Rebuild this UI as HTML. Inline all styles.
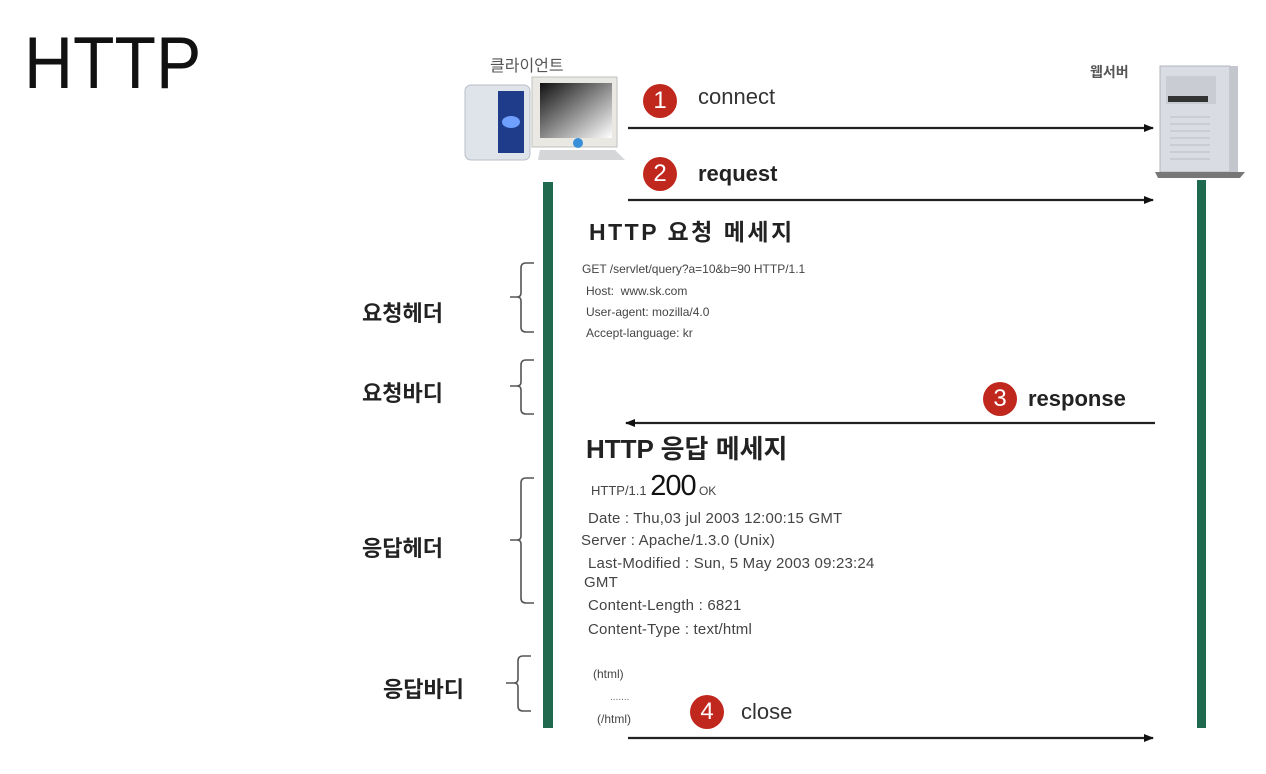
<!DOCTYPE html>
<html><head><meta charset="utf-8"><style>
body{margin:0;width:1266px;height:774px;background:#fff;position:relative;overflow:hidden;font-family:"Liberation Sans","Noto Sans CJK KR",sans-serif;color:#222}
.a{position:absolute;white-space:nowrap}
.c{position:absolute;width:34px;height:34px;border-radius:50%;background:#c0271d;color:#fff;font-size:24px;text-align:center;line-height:34px}
.k{font-weight:bold;font-size:22px;color:#222}
.s{font-size:12px;color:#444}
.r{font-size:15px;color:#444;letter-spacing:0.2px}
</style></head><body>
<div class="a" style="left:24px;top:22px;font-size:73px;color:#111;transform:scaleX(0.93);transform-origin:left top">HTTP</div>

<div class="a" style="left:490px;top:52px;font-size:16px;color:#555">클라이언트</div>
<div class="a" style="left:1090px;top:62px;font-size:14px;color:#555;font-weight:bold">웹서버</div>

<svg class="a" style="left:460px;top:75px" width="170" height="90">
<rect x="5" y="10" width="65" height="75" rx="6" fill="#dfe3ea" stroke="#b8bec8"/>
<rect x="38" y="16" width="26" height="62" fill="#1e3c8a"/>
<ellipse cx="51" cy="47" rx="9" ry="6" fill="#6fa0ff"/>
<rect x="72" y="2" width="85" height="70" fill="#e9e8e3" stroke="#c0c0bc"/>
<defs><linearGradient id="g" x1="0" y1="0" x2="1" y2="1"><stop offset="0" stop-color="#111"/><stop offset="1" stop-color="#fff"/></linearGradient></defs>
<rect x="80" y="8" width="72" height="55" fill="url(#g)"/>
<circle cx="118" cy="68" r="5" fill="#3a8fd9"/>
<polygon points="80,75 155,75 165,85 78,85" fill="#d5d6d8"/>
</svg>
<svg class="a" style="left:1150px;top:62px" width="100" height="118">
<rect x="10" y="4" width="70" height="106" fill="#d9dde3" stroke="#b0b5bc"/>
<rect x="16" y="14" width="50" height="28" fill="#c9ccd2"/>
<rect x="18" y="34" width="40" height="6" fill="#333"/>
<g stroke="#bcc0c6"><line x1="20" y1="55" x2="60" y2="55"/><line x1="20" y1="62" x2="60" y2="62"/><line x1="20" y1="69" x2="60" y2="69"/><line x1="20" y1="76" x2="60" y2="76"/><line x1="20" y1="83" x2="60" y2="83"/><line x1="20" y1="90" x2="60" y2="90"/><line x1="20" y1="97" x2="60" y2="97"/></g>
<rect x="80" y="4" width="8" height="106" fill="#c3c7cd"/>
<polygon points="5,110 95,110 90,116 8,116" fill="#777"/>
</svg>

<div class="a" style="left:543px;top:182px;width:10px;height:546px;background:#1f6a4e"></div>
<div class="a" style="left:1197px;top:180px;width:9px;height:548px;background:#1f6a4e"></div>

<svg class="a" style="left:0;top:0" width="1266" height="774">
<defs><marker id="m" markerWidth="10" markerHeight="8" refX="9" refY="4" orient="auto" markerUnits="userSpaceOnUse"><path d="M0,0 L10,4 L0,8z" fill="#111"/></marker></defs>
<g stroke="#222" stroke-width="2.2" fill="none">
<line x1="628" y1="128" x2="1153" y2="128" marker-end="url(#m)"/>
<line x1="628" y1="200" x2="1153" y2="200" marker-end="url(#m)"/>
<line x1="1155" y1="423" x2="626" y2="423" marker-end="url(#m)"/>
<line x1="628" y1="738" x2="1153" y2="738" marker-end="url(#m)"/>
</g>
<g stroke="#555" stroke-width="1.6" fill="none">
<path d="M534,263 H526 Q521,263 521,268 V293 Q521,297 517,297 H510 M517,297 Q521,297 521,301 V327 Q521,332 526,332 H534"/>
<path d="M534,360 H526 Q521,360 521,365 V382 Q521,386 517,386 H510 M517,386 Q521,386 521,390 V409 Q521,414 526,414 H534"/>
<path d="M534,478 H526 Q521,478 521,483 V536 Q521,540 517,540 H510 M517,540 Q521,540 521,544 V598 Q521,603 526,603 H534"/>
<path d="M531,656 H523 Q518,656 518,661 V679 Q518,683 514,683 H506 M514,683 Q518,683 518,687 V706 Q518,711 523,711 H531"/>
</g>
</svg>

<div class="c" style="left:643px;top:84px">1</div>
<div class="a" style="left:698px;top:84px;font-size:22px;color:#333">connect</div>
<div class="c" style="left:643px;top:157px">2</div>
<div class="a" style="left:698px;top:161px;font-size:22px;font-weight:bold;color:#222">request</div>
<div class="c" style="left:983px;top:382px">3</div>
<div class="a" style="left:1028px;top:386px;font-size:22px;font-weight:bold;color:#222">response</div>
<div class="c" style="left:690px;top:695px">4</div>
<div class="a" style="left:741px;top:699px;font-size:22px;color:#333">close</div>

<div class="a" style="left:589px;top:213px;font-size:23px;font-weight:bold;color:#222;letter-spacing:2.5px">HTTP 요청 메세지</div>
<div class="a s" style="left:582px;top:262px">GET /servlet/query?a=10&amp;b=90 HTTP/1.1</div>
<div class="a s" style="left:586px;top:284px">Host:&nbsp; www.sk.com</div>
<div class="a s" style="left:586px;top:305px">User-agent: mozilla/4.0</div>
<div class="a s" style="left:586px;top:326px">Accept-language: kr</div>

<div class="a k" style="left:362px;top:296px">요청헤더</div>
<div class="a k" style="left:362px;top:376px">요청바디</div>
<div class="a k" style="left:362px;top:531px">응답헤더</div>
<div class="a k" style="left:383px;top:672px">응답바디</div>

<div class="a" style="left:586px;top:429px;font-size:26px;font-weight:bold;color:#222;letter-spacing:0px">HTTP 응답 메세지</div>
<div class="a" style="left:591px;top:470px;color:#444"><span style="font-size:13px">HTTP/1.1 </span><span style="font-size:29px;color:#111;letter-spacing:-1px">200</span><span style="font-size:12px"> OK</span></div>
<div class="a r" style="left:588px;top:510px">Date : Thu,03 jul 2003 12:00:15 GMT</div>
<div class="a r" style="left:581px;top:532px">Server : Apache/1.3.0 (Unix)</div>
<div class="a r" style="left:588px;top:555px">Last-Modified : Sun, 5 May 2003 09:23:24</div>
<div class="a r" style="left:584px;top:574px">GMT</div>
<div class="a r" style="left:588px;top:597px">Content-Length : 6821</div>
<div class="a r" style="left:588px;top:621px">Content-Type : text/html</div>
<div class="a" style="left:593px;top:667px;font-size:12px;color:#444">(html)</div>
<div class="a" style="left:610px;top:692px;font-size:10px;color:#666">.......</div>
<div class="a" style="left:597px;top:712px;font-size:12px;color:#444">(/html)</div>
</body></html>
